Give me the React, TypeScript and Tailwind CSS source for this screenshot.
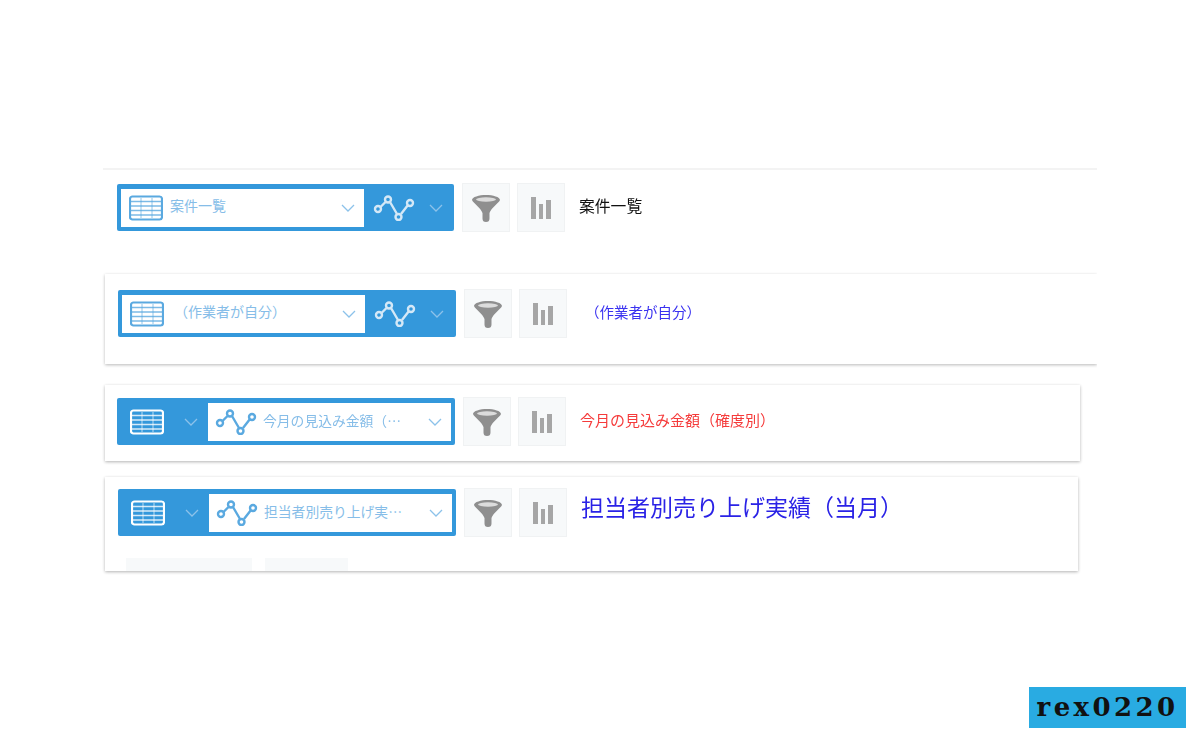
const JP = 'font-["Noto_Sans_CJK_JP","Noto_Sans",sans-serif]';

function TableIcon({ color }: { color: string }) {
  return (
    <svg width="34" height="26" viewBox="0 0 34 26" fill="none" stroke={color}>
      <path d="M1 6.5h32M1 11h32M1 15.5h32M1 20h32" strokeWidth="1.4" opacity="0.8" />
      <path d="M12 3v20M23 3v20" strokeWidth="1.2" opacity="0.55" />
      <rect x="1" y="1.5" width="32" height="23" rx="2.5" strokeWidth="2.2" />
    </svg>
  );
}

function GraphIcon({ color }: { color: string }) {
  return (
    <svg width="42" height="26" viewBox="0 0 42 26" fill="none" stroke={color} strokeWidth="2.4">
      <path d="M7.5 12 12.5 7M17 7l7 12M28 19l7-9" />
      <circle cx="5" cy="14" r="3" />
      <circle cx="15" cy="4.5" r="3" />
      <circle cx="25.5" cy="22" r="3" />
      <circle cx="37" cy="8" r="3" />
    </svg>
  );
}

function Chevron({ color }: { color: string }) {
  return (
    <svg width="14" height="8" viewBox="0 0 14 8" fill="none" stroke={color} strokeWidth="1.3">
      <path d="M1 1l6 6 6-6" />
    </svg>
  );
}

function SideButtons() {
  return (
    <div className="flex gap-[7px] ml-[8px] -my-px">
      <div className="w-[48px] h-[49px] bg-[#f7f9fa] border border-[#f0f2f3] flex items-center justify-center">
        <svg width="30" height="28" viewBox="0 0 30 28">
          <path d="M1 6C1 3 8 1 15 1s14 2 14 5c-1 3-9 8-10.5 13v5.5a3.5 3.5 0 0 1-7 0V19C10 14 2 9 1 6Z" fill="#8f8f8f" />
          <ellipse cx="15" cy="5.5" rx="10" ry="2.2" fill="#dcdcdc" />
        </svg>
      </div>
      <div className="w-[48px] h-[49px] bg-[#f7f9fa] border border-[#f0f2f3] flex items-center justify-center">
        <svg width="20" height="22" viewBox="0 0 20 22" fill="#a6a6a6">
          <rect x="0" y="0" width="5" height="22" />
          <rect x="8" y="7" width="4" height="15" />
          <rect x="15" y="3" width="5" height="19" />
        </svg>
      </div>
    </div>
  );
}

function Toolbar({ mode, label, indent }: { mode: 'table' | 'graph'; label: string; indent?: boolean }) {
  if (mode === 'table') {
    return (
      <div className="flex items-center">
        <div className={`${indent ? 'w-[338px]' : 'w-[337px]'} h-[47px] bg-[#3498db] rounded-[2px] flex items-center pl-[4px]`}>
          <div className="w-[243px] h-[38px] bg-white flex items-center pl-[8px] pr-[9px]">
            <TableIcon color="#5aa9e0" />
            <span className={`${JP} text-[14px] pb-[4px] text-[#86bde8] ${indent ? 'ml-[10px]' : 'ml-[7px]'}`}>{label}</span>
            <span className="ml-auto"><Chevron color="#8cc2ea" /></span>
          </div>
          <div className="ml-[9px]"><GraphIcon color="#d4e8f7" /></div>
          <div className="ml-[14px]"><Chevron color="#8cc2ea" /></div>
        </div>
        <SideButtons />
      </div>
    );
  }
  return (
    <div className="flex items-center">
      <div className="w-[338px] h-[47px] bg-[#3498db] rounded-[2px] flex items-center">
        <div className="ml-[13px]"><TableIcon color="#ffffff" /></div>
        <div className="ml-[20px]"><Chevron color="#8cc2ea" /></div>
        <div className="ml-[10px] w-[243px] h-[38px] bg-white flex items-center pl-[7px] pr-[9px]">
          <GraphIcon color="#5aa9e0" />
          <span className={`${JP} text-[13.8px] pb-[2px] text-[#86bde8] ml-[6px]`}>{label}</span>
          <span className="ml-auto"><Chevron color="#8cc2ea" /></span>
        </div>
      </div>
      <SideButtons />
    </div>
  );
}

export default function App() {
  return (
    <div className="relative h-[742px] w-[1200px] overflow-hidden bg-white">
      <div className="pt-[168px] pl-[103px] blur-[0.7px]">
        <div className="w-[994px] h-[106px] border-t-2 border-[#f3f3f3] pt-[14px] pl-[14px]">
          <div className="flex items-center">
            <Toolbar mode="table" label="案件一覧" />
            <span className={`${JP} ml-[14px] pb-[4px] text-[15.8px] text-[#111111]`}>案件一覧</span>
          </div>
        </div>

        <div className="ml-[2px] w-[992px] h-[90px] bg-white shadow-[0_1px_3px_rgba(0,0,0,0.28)] [clip-path:inset(-4px_0_-4px_-4px)] pt-[16px] pl-[13px]">
          <div className="flex items-center">
            <Toolbar mode="table" label="（作業者が自分）" indent />
            <span className={`${JP} ml-[18px] pb-[4px] text-[14.5px] text-[#3a32f0]`}>（作業者が自分）</span>
          </div>
        </div>

        <div className="ml-[2px] mt-[21px] w-[975px] h-[76px] bg-white shadow-[0_1px_3px_rgba(0,0,0,0.3)] pt-[13px] pl-[12px]">
          <div className="flex items-center">
            <Toolbar mode="graph" label="今月の見込み金額（…" />
            <span className={`${JP} ml-[14px] pb-[3px] text-[15px] text-[#f53b3b]`}>今月の見込み金額（確度別）</span>
          </div>
        </div>

        <div className="ml-[2px] mt-[16px] w-[973px] h-[94px] bg-white shadow-[0_1px_3px_rgba(0,0,0,0.3)] pt-[12px] pl-[13px] overflow-hidden">
          <div className="flex items-start">
            <Toolbar mode="graph" label="担当者別売り上げ実…" />
            <span className={`${JP} ml-[14px] text-[23px] leading-[34px] text-[#2a22e6]`}>担当者別売り上げ実績（当月）</span>
          </div>
          <div className="flex gap-[13px] ml-[8px] mt-[22px]">
            <div className="w-[126px] h-[20px] bg-[#f7f9fa]" />
            <div className="w-[83px] h-[20px] bg-[#f7f9fa]" />
          </div>
        </div>
      </div>

      <div className="absolute left-[1029px] top-[687px] w-[157px] h-[41px] bg-[#29abe2] flex items-center justify-center font-['DejaVu_Serif',serif] font-bold text-[26px] tracking-[3.4px] text-[#111111]">
        rex0220
      </div>
    </div>
  );
}
